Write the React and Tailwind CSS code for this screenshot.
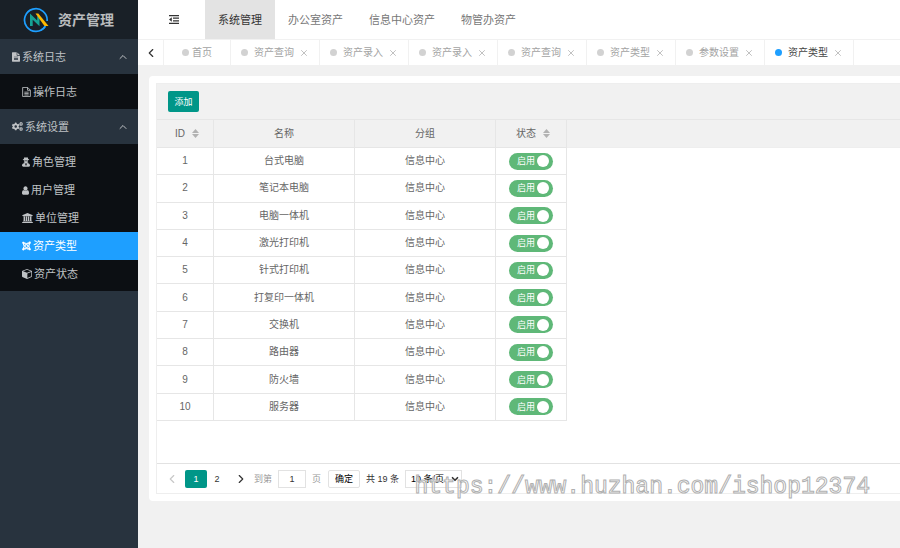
import { useState } from "react";
import { FaCogs, FaJoomla } from "react-icons/fa";
import { ChevronUp, ChevronLeft, ChevronRight, ChevronDown, X } from "lucide-react";

function FileIcon({ className }) {
  return (
    <svg viewBox="0 0 12 14" className={className} fill="currentColor" aria-hidden="true">
      <path
        fillRule="evenodd"
        d="M.8 0H7v4.200c0 .4.300.8.800.8H12v8.200c0 .4-.3.8-.8.8H.8c-.5 0-.8-.4-.8-.8V.8C0 .300.300 0 .8 0zM3 6.500v1h6v-1zm0 2v1h6v-1zm0 2v1h6v-1zM8 .1 11.900 4H8z"
      />
    </svg>
  );
}

function FileOutlineIcon({ className }) {
  return (
    <svg viewBox="0 0 12 14" className={className} fill="none" stroke="currentColor" strokeWidth="1.200" aria-hidden="true">
      <path d="M.6.6h7l3.800 3.800v9H.6zM7.400.6v4h4M3 7.200h6M3 9.200h6M3 11.200h6" />
    </svg>
  );
}

function AgentIcon({ className }) {
  return (
    <svg viewBox="0 0 12 14" className={className} fill="currentColor" aria-hidden="true">
      <path
        fillRule="evenodd"
        d="M4.200 0c.7 0 1.100.4 1.800.4S7.100 0 7.800 0c.8 0 1.300 1.600 1.500 2.600 1 .2 1.700.5 1.700.8 0 .4-.8.7-1.800.9 0 1.300-.4 2.200-1 2.900l-.2.500h1.500l-.5 1.100C10.900 9.300 12 10.400 12 12.200 12 13.400 11.200 14 10 14H2c-1.200 0-2-.6-2-1.800 0-1.800 1.100-2.900 3-3.400l-.5-1.100H4l-.2-.5c-.6-.7-1-1.600-1-2.900C1.800 4.100 1 3.800 1 3.400c0-.3.700-.6 1.700-.8C2.900 1.600 3.400 0 4.200 0zM3.600 4.600c.1.800.4 1.300 1.100 1.300.800 0 .9-.9 1.300-.9s.5.9 1.300.9c.7 0 1-.5 1.100-1.300zM4.200 9l1 4 .5-2.600L5.200 9zm3.600 0h-1l-.5 1.400.5 2.600z"
      />
    </svg>
  );
}

function UserIcon({ className }) {
  return (
    <svg viewBox="256 128 1280 1536" className={className} fill="currentColor" aria-hidden="true">
      <path d="M1536 1399q0 109-62.500 187t-150.500 78h-854q-88 0-150.500-78t-62.500-187q0-85 8.500-160.500t31.500-152 58.500-131 94-89 134.500-34.500q131 128 313 128t313-128q76 0 134.500 34.500t94 89 58.500 131 31.500 152 8.500 160.500zm-256-887q0 159-112.500 271.500t-271.500 112.500-271.500-112.500-112.500-271.500 112.500-271.500 271.500-112.500 271.500 112.500 112.500 271.500z" />
    </svg>
  );
}

function BankIcon({ className }) {
  return (
    <svg viewBox="0 0 15 14" className={className} fill="currentColor" aria-hidden="true">
      <path d="M7.500 0 15 3v1h-1v.5H1V4H0V3zM2 5h2v6h1V5h2v6h1V5h2v6h1V5h2v6h.500l.5.5v.5H1v-.5l.5-.5H2zM.5 12.500h14L15 13v1H0v-1z" />
    </svg>
  );
}

function CubeIcon({ className }) {
  return (
    <svg viewBox="0 0 14 14" className={className} fill="currentColor" aria-hidden="true">
      <path
        fillRule="evenodd"
        d="M7 0l6.300 2.300c.4.200.7.5.7.9v7c0 .4-.2.700-.5.900L7 14 .5 11.100c-.3-.2-.5-.5-.5-.9v-7c0-.4.300-.7.700-.9zM7 1.100 1.500 3.200 7 5.200l5.500-2zM7.500 12.500 13 10V4.300l-5.500 2z"
      />
    </svg>
  );
}

const menu = [
  {
    title: "系统日志",
    icon: FileIcon,
    size: "h-[10px] w-2",
    items: [{ title: "操作日志", icon: FileOutlineIcon, size: "h-[10px] w-[9px]" }],
  },
  {
    title: "系统设置",
    icon: FaCogs,
    size: "h-[11px] w-[11px]",
    items: [
      { title: "角色管理", icon: AgentIcon, size: "h-[10px] w-2" },
      { title: "用户管理", icon: UserIcon, size: "h-[9px] w-[7px]" },
      { title: "单位管理", icon: BankIcon, size: "h-[10px] w-[11px]" },
      { title: "资产类型", icon: FaJoomla, size: "h-[10px] w-[9px]", active: true },
      { title: "资产状态", icon: CubeIcon, size: "h-[10px] w-[10px]" },
    ],
  },
];

const modules = ["系统管理", "办公室资产", "信息中心资产", "物管办资产"];
const tabs = ["资产查询", "资产录入", "资产录入", "资产查询", "资产类型", "参数设置", "资产类型"];
const names = ["台式电脑", "笔记本电脑", "电脑一体机", "激光打印机", "针式打印机", "打复印一体机", "交换机", "路由器", "防火墙", "服务器"];

function Logo() {
  return (
    <svg viewBox="0 0 26 26" className="size-[26px]" aria-hidden="true">
      <path d="M22.300 19.200A11.300 11.300 0 1 1 24.100 14" fill="none" stroke="#1e9fff" strokeWidth="1.700" />
      <path d="M22.300 19.200A11.300 11.300 0 0 1 18 23.100" fill="none" stroke="#1e9fff" strokeWidth="1.700" />
      <path d="M7 19V6.500l7.200 7V8.800l2.300 2.200v8.200L9.700 12.700V19z" fill="#16a394" />
      <path d="M12.500 6.500h2.800L25.500 19h-4z" fill="#ffb800" />
    </svg>
  );
}

function Sidebar() {
  return (
    <aside className="w-[138px] shrink-0 bg-[#28333e] text-[#bfc2c5]">
      <div className="flex h-[39px] items-center gap-[9px] bg-[#192027] pl-[23px]">
        <Logo />
        <h1 className="text-sm font-bold text-[#b9bcbe]">资产管理</h1>
      </div>
      <nav>
        {menu.map((group) => (
          <section key={group.title}>
            <button type="button" className="flex h-[35px] w-full items-center gap-[2px] pr-[9px] pl-3">
              <group.icon className={group.size} />
              <span>{group.title}</span>
              <ChevronUp className="ml-auto size-3" strokeWidth={2} />
            </button>
            <ul className="bg-[#0c0f13] pt-1 pb-[3px]">
              {group.items.map((item) => (
                <li key={item.title}>
                  <a
                    href="#"
                    className={
                      item.active
                        ? "flex h-7 items-center gap-[2px] bg-[#1e9fff] pl-[22px] text-white"
                        : "flex h-7 items-center gap-[2px] pl-[22px]"
                    }
                  >
                    <item.icon className={item.size} />
                    {item.title}
                  </a>
                </li>
              ))}
            </ul>
          </section>
        ))}
      </nav>
    </aside>
  );
}

function Header() {
  return (
    <header className="flex h-[39px] bg-white text-[#777]">
      <button type="button" aria-label="收起菜单" className="flex w-[67px] items-center justify-center pl-1">
        <svg viewBox="0 0 10 9" className="h-[9px] w-[10px]" fill="#333" aria-hidden="true">
          <path d="M0 0h10v1.200H0zM4 2.600h6v1.200H4zM4 5.200h6v1.200H4zM0 7.800h10V9H0zM2.800 2.300v4.400L0 4.500z" />
        </svg>
      </button>
      {modules.map((name, i) => (
        <a
          key={name}
          href="#"
          className={i === 0 ? "flex items-center bg-[#e3e3e3] px-[13px] text-[#333]" : "flex items-center px-[13px]"}
        >
          {name}
        </a>
      ))}
    </header>
  );
}

function TabBar() {
  return (
    <div className="flex h-[26px] border-t border-[#f1f1f1] bg-white text-[10px] text-[#a3a3a3]">
      <button type="button" aria-label="向左" className="flex w-[26px] items-center justify-center border-r border-[#f1f1f1]">
        <ChevronLeft className="size-[14px] text-[#333]" />
      </button>
      <a href="#" className="flex w-[67px] items-center justify-center gap-[3px] border-r border-[#f1f1f1]">
        <span className="size-[7px] rounded-full bg-[#d2d2d2]" />
        首页
      </a>
      {tabs.map((name, i) => {
        const active = i === tabs.length - 1;
        return (
          <div key={i} className="flex w-[89px] items-center border-r border-[#f1f1f1] pl-[10px]">
            <span className={active ? "size-[7px] rounded-full bg-[#1e9fff]" : "size-[7px] rounded-full bg-[#d2d2d2]"} />
            <a href="#" className={active ? "ml-[6px] text-[#444]" : "ml-[6px]"}>
              {name}
            </a>
            <button type="button" aria-label={`关闭${name}`} className="ml-[5px]">
              <X className="size-[10px] text-[#b5b5b5]" strokeWidth={2} />
            </button>
          </div>
        );
      })}
    </div>
  );
}

function SortButton({ children }) {
  return (
    <button type="button" className="inline-flex items-center gap-[7px] pl-1 align-middle">
      {children}
      <svg viewBox="0 0 7 9" className="h-[9px] w-[7px]" fill="#b2b2b2" aria-hidden="true">
        <path d="M3.500 0L7 4H0zM3.500 9L0 5h7z" />
      </svg>
    </button>
  );
}

function Switch({ label }) {
  const [on, setOn] = useState(true);
  return (
    <label className="relative inline-flex h-[17px] w-11 items-center justify-between rounded-full bg-[#5fb878] pr-1 pl-2 align-middle text-[9px] text-white">
      <input type="checkbox" checked={on} onChange={() => setOn(!on)} aria-label={label} className="sr-only" />
      启用
      <span className="size-3 rounded-full bg-white" />
    </label>
  );
}

function DataTable() {
  const head = "border-r border-b border-[#e6e6e6] font-normal";
  const cell = "border-r border-b border-[#e6e6e6]";
  return (
    <table className="h-[301px] w-full table-fixed border-separate border-spacing-0 text-center text-[10px] leading-3 text-[#666]">
      <colgroup>
        <col className="w-[57px]" />
        <col className="w-[141px]" />
        <col className="w-[141px]" />
        <col className="w-[71px]" />
        <col />
      </colgroup>
      <thead className="bg-[#f1f1f1]">
        <tr className="h-7">
          <th className={head}><SortButton>ID</SortButton></th>
          <th className={head}>名称</th>
          <th className={head}>分组</th>
          <th className={head}><SortButton>状态</SortButton></th>
          <td className="border-b border-[#eee]" />
        </tr>
      </thead>
      <tbody>
        {names.map((name, i) => (
          <tr key={name}>
            <td className={cell}>{i + 1}</td>
            <td className={cell}>{name}</td>
            <td className={cell}>信息中心</td>
            <td className={cell}><Switch label={name} /></td>
            <td />
          </tr>
        ))}
      </tbody>
    </table>
  );
}

function Pagination() {
  return (
    <div className="flex h-[30px] items-center border-t border-[#e2e2e2] pl-2 text-[9px] leading-3 text-[#333]">
      <button type="button" aria-label="上一页" className="mr-[6px]">
        <ChevronLeft className="size-[14px] text-[#c8c8c8]" />
      </button>
      <button type="button" className="h-[18px] w-[22px] rounded-xs bg-[#009688] text-white">1</button>
      <button type="button" className="h-[18px] w-5">2</button>
      <button type="button" aria-label="下一页" className="mr-[6px] ml-[7px]">
        <ChevronRight className="size-[14px]" />
      </button>
      <label className="flex items-center gap-[6px] text-[#999]">
        到第
        <input defaultValue="1" aria-label="页码" className="h-[18px] w-7 border border-[#e2e2e2] bg-white text-center text-[#333]" />
        页
      </label>
      <button type="button" className="ml-[7px] h-[18px] w-8 rounded-xs border border-[#e2e2e2] bg-white text-black">确定</button>
      <span className="mx-[6px]">共 19 条</span>
      <div className="relative">
        <select aria-label="每页条数" className="h-[18px] w-[57px] appearance-none border border-[#e2e2e2] bg-white pl-[5px] text-black">
          <option>10 条/页</option>
          <option>20 条/页</option>
        </select>
        <ChevronDown className="pointer-events-none absolute top-1 right-[2px] size-[10px]" strokeWidth={4} />
      </div>
    </div>
  );
}

export default function App() {
  return (
    <div className="relative flex min-h-screen overflow-hidden bg-[#f1f1f1] font-['Liberation_Sans','Noto_Sans_CJK_SC',sans-serif] text-[11px] leading-4">
      <Sidebar />
      <div className="min-w-0 flex-1">
        <Header />
        <TabBar />
        <main className="pt-[11px] pl-[11px]">
          <div className="relative rounded-l-sm bg-white py-[7px] pl-[7px]">
            <div className="border border-r-0 border-[#eee]">
              <div className="flex h-9 items-center border-b border-[#e6e6e6] bg-[#f1f1f1] pl-[11px]">
                <button type="button" className="h-[21px] w-[31px] rounded-xs bg-[#009688] text-[9px] text-white">添加</button>
              </div>
              <div className="pb-[42px]">
                <DataTable />
              </div>
              <Pagination />
            </div>
            <p className="pointer-events-none absolute right-[30px] bottom-0 font-['Liberation_Mono',monospace] text-[23px] leading-7 whitespace-nowrap text-white/60 [-webkit-text-stroke:1px_#b0b0b0]">
              https://www.huzhan.com/ishop12374
            </p>
          </div>
        </main>
      </div>
    </div>
  );
}
